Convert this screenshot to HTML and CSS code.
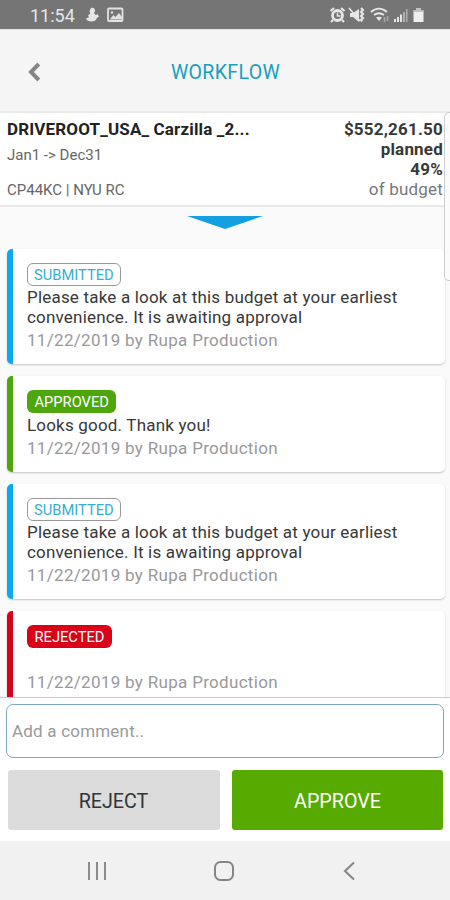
FILE: index.html
```html
<!DOCTYPE html>
<html lang="en">
<head>
<meta charset="utf-8">
<title>Workflow</title>
<link rel="stylesheet" href="styles.css">
</head>
<body>
<div class="status">
  <span class="time">11:54</span>
  <svg class="person" width="15" height="16" viewBox="0 0 15 16"><path fill="#e6e6e6" d="M6 1c2-1 4 .5 4 2.500 0 1-.3 1.500-1 2.200L10.500 8l2-.8 1.500 2.300-2 1.200c-.5 2.300-2.500 3.800-5.300 3.800-3 0-5-1-5.700-3l3-1.200L3 8.500l2.200-2L4.500 4z"/></svg>
  <svg class="image" width="17" height="16" viewBox="0 0 17 16"><rect x="1" y="1.500" width="14.500" height="12.500" rx="1" fill="none" stroke="#e2e2e2" stroke-width="1.800"/><circle cx="5" cy="5.500" r="1.200" fill="#e2e2e2"/><path d="M3 12l3.500-4 2 2L12 6l3 4v2.500H3z" fill="#e2e2e2"/></svg>
  <span class="grow"></span>
  <svg width="96" height="18" viewBox="0 0 96 18">
    <g fill="none" stroke="#e6e6e6">
      <circle cx="8.500" cy="9.500" r="5" stroke-width="2.800"/>
      <path d="M8.500 6.500v3.500h3" stroke-width="1.500"/>
      <path d="M1.500 5L5 2M12 2l3.500 3M4 14l-2 2M13 14l2 2" stroke-width="2.200"/>
      <path d="M20 2l11 13" stroke-width="1.500"/>
      <path d="M32 2l2 2-2 2 2 2-2 2 2 2-2 2 1 1.500" stroke-width="2.200"/>
      <path d="M42 6c5-4.500 11-4.500 16 0M45 9c3.500-2.500 6.500-2.500 10 0" stroke-width="1.900"/>
      <path d="M55.500 11v5M58.500 10v5" stroke="#a5a5a5" stroke-width="1.700"/>
    </g>
    <path d="M21 7h3l6-4v13l-6-5h-3z" fill="#e6e6e6"/>
    <path d="M47 11.500q3-1.500 6 0L50 15z" fill="#e6e6e6"/>
    <path d="M65 13h2v3h-2zM68 11h2v5h-2zM71 8.500h2V16h-2z" fill="#e6e6e6"/>
    <path d="M74 6h2v10h-2zM77 3h1.500v13H77z" fill="#b0b0b0"/>
    <path d="M84.500 4.500H87V2h5v2.500h2.500V16h-10z" fill="#efefef"/><path d="M84.500 4.500H87V2h5v2.500h2.500V6h-10z" fill="#c2c2c2"/>
  </svg>
</div>
<header class="header">
  <svg class="back" width="14" height="20" viewBox="0 0 14 20"><path d="M11.800 2L4 10l7.800 8" fill="none" stroke="#858585" stroke-width="4"/></svg>
  <h1 class="title">WORKFLOW</h1>
</header>
<section class="summary">
  <div class="summary-left">
    <div class="name">DRIVEROOT_USA_ Carzilla _2...</div>
    <div class="range">Jan1 -&gt; Dec31</div>
    <div class="code">CP44KC | NYU RC</div>
  </div>
  <div class="summary-right">
    <div>$552,261.50</div>
    <div>planned</div>
    <div>49%</div>
    <div class="of">of budget</div>
  </div>
</section>
<div class="edge-panel"></div>
<main class="feed">
  <svg class="arrow" width="76" height="13" viewBox="0 0 76 13"><path d="M0 0h76L38 13z" fill="#139fe0"/></svg>
  <article class="card blue">
    <span class="tag outline">SUBMITTED</span>
    <p class="message">Please take a look at this budget at your earliest<br>convenience. It is awaiting approval</p>
    <p class="meta">11/22/2019 by Rupa Production</p>
  </article>
  <article class="card green">
    <span class="tag">APPROVED</span>
    <p class="message">Looks good. Thank you!</p>
    <p class="meta">11/22/2019 by Rupa Production</p>
  </article>
  <article class="card blue">
    <span class="tag outline">SUBMITTED</span>
    <p class="message">Please take a look at this budget at your earliest<br>convenience. It is awaiting approval</p>
    <p class="meta">11/22/2019 by Rupa Production</p>
  </article>
  <article class="card red">
    <span class="tag">REJECTED</span>
    <p class="message"></p>
    <p class="meta">11/22/2019 by Rupa Production</p>
  </article>
</main>
<footer class="actions">
  <div class="comment">Add a comment..</div>
  <div class="buttons">
    <button class="button reject">REJECT</button>
    <button class="button approve">APPROVE</button>
  </div>
</footer>
<nav class="nav">
  <svg width="20" height="20" viewBox="0 0 20 20"><path d="M2 1v18M10 1v18M18 1v18" stroke="#8c8c8c" stroke-width="2"/></svg>
  <svg width="22" height="20" viewBox="0 0 22 20"><rect x="2" y="1" width="18" height="18" rx="5.500" fill="none" stroke="#858585" stroke-width="2"/></svg>
  <svg width="20" height="20" viewBox="0 0 20 20"><path d="M14 1.500L5 10l9 8.500" fill="none" stroke="#858585" stroke-width="2"/></svg>
</nav>
</body>
</html>
```

FILE: styles.css
```css
* { box-sizing: border-box; }
body {
  margin: 0;
  width: 450px;
  height: 900px;
  overflow: hidden;
  display: flex;
  flex-direction: column;
  font-family: Roboto, sans-serif;
  background: #fafafa;
  color: #383838;
}
p, h1 { margin: 0; font-weight: 400; }
svg { display: block; flex: none; }

.status {
  height: 29px;
  flex: none;
  display: flex;
  align-items: center;
  padding: 1px 25px 0 30px;
  background: #757575;
  color: #e6e6e6;
}
.time { font-size: 18px; width: 55px; }
.image { margin-left: 7px; }
.grow { flex: 1; }

.header {
  height: 84px;
  flex: none;
  display: grid;
  grid-template-columns: 100px 1fr 100px;
  align-items: center;
  background: #f5f5f5;
  border-top: 1px solid #dedede;
  border-bottom: 2px solid #e9e9e9;
}
.back { margin-left: 27px; margin-top: 2px; }
.title {
  text-align: center;
  font-size: 19.500px;
  letter-spacing: 0.350px;
  color: #169fc0;
  padding: 3px 0 0 1px;
}

.summary {
  height: 94px;
  flex: none;
  display: flex;
  justify-content: space-between;
  padding: 7px 7px 0;
  background: #fff;
  border-bottom: 2px solid #e9e9e9;
}
.name { font-size: 17px; font-weight: 700; letter-spacing: 0.150px; line-height: 20px; margin-top: -1px; color: #222; white-space: nowrap; }
.range { font-size: 15px; line-height: 18px; margin-top: 7px; color: #666; }
.code { font-size: 15px; line-height: 18px; margin-top: 17px; color: #666; }
.summary-right { text-align: right; font-size: 17px; font-weight: 700; letter-spacing: 0.200px; line-height: 20px; margin-top: -1px; }
.summary-right .of { font-weight: 400; color: #777; }

.edge-panel {
  position: absolute;
  left: 444px;
  top: 112px;
  width: 12px;
  height: 169px;
  border: 1px solid #ccc;
  border-radius: 5px;
  background: #fbfbfb;
}

.feed {
  height: 490px;
  flex: none;
  overflow: hidden;
  padding: 9px 5px 0 7px;
}
.arrow { margin: 0 auto 20px 180px; }
.card {
  height: 115px;
  margin-bottom: 12px;
  padding: 14px 14px 0;
  border-left: 6px solid;
  border-radius: 5px;
  background: #fff;
  box-shadow: 0 1px 2px rgba(0, 0, 0, 0.22);
}
.card.blue { border-left-color: #0ba9f4; }
.card.green { height: 96px; border-left-color: #4ca60c; }
.card.red { border-left-color: #d90219; }
.tag {
  display: block;
  width: max-content;
  height: 23px;
  padding: 0 7.500px;
  border-radius: 6px;
  font-size: 14.700px;
  line-height: 24px;
  color: #fff;
}
.tag.outline { border: 1px solid #999; line-height: 22px; padding: 0 6px; color: #35aed0; }
.green .tag { background: #4ca60c; }
.red .tag { background: #d90219; }
.message { min-height: 20px; margin-top: 1px; font-size: 17px; letter-spacing: 0.190px; line-height: 20px; white-space: nowrap; }
.green .message { padding-top: 1px; min-height: 21px; }
.meta { margin-top: 3px; font-size: 17px; letter-spacing: 0.310px; line-height: 20px; color: #999; white-space: nowrap; }

.actions {
  height: 144px;
  flex: none;
  padding: 6px 6px 0;
  background: #fff;
  border-top: 1px solid #ccc;
}
.comment {
  height: 54px;
  border: 1.500px solid #7fa9c0;
  border-radius: 7px;
  padding-left: 5px;
  font-size: 17px;
  letter-spacing: 0.200px;
  line-height: 53px;
  color: #999;
}
.buttons { display: flex; gap: 12px; padding: 12px 1px 0 2px; }
.button {
  flex: 1;
  height: 60px;
  border: 0;
  border-radius: 3px;
  padding: 2px 0 0;
  font: 400 19.700px Roboto, sans-serif;
}
.reject { background: #dcdcdc; color: #333; padding-right: 1px; }
.approve { background: #56aa00; color: #fff; }

.nav {
  height: 59px;
  flex: none;
  display: grid;
  grid-template-columns: 1fr 58px 1fr;
  align-items: center;
  justify-items: center;
  padding: 1px 3px 0 0;
  background: #f1f1f1;
}
```
